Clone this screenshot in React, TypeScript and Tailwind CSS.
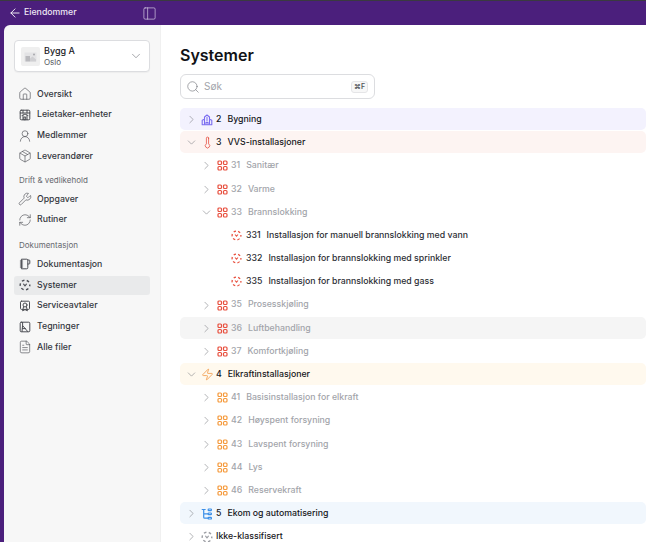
import React from "react";
import { ArrowLeft, PanelLeft, ChevronDown, ChevronRight, House, UserRound, Package, Wrench, RefreshCw, FileText, Search, Thermometer, Zap } from "lucide-react";

const Grid4 = ({ c }: { c: string }) => (
  <svg width="11" height="11" viewBox="0 0 11 11" fill="none" stroke={c} strokeWidth="1.2" className="shrink-0">
    <rect x="1" y="1" width="3.5" height="3.5" rx="1" />
    <rect x="6.5" y="1" width="3.5" height="3.5" rx="1" />
    <rect x="1" y="6.5" width="3.5" height="3.5" rx="1" />
    <rect x="6.5" y="6.5" width="3.5" height="3.5" rx="1" />
  </svg>
);

const DashedCircle = ({ c, size = 11 }: { c: string; size?: number }) => (
  <svg width={size} height={size} viewBox="0 0 12 12" fill="none" stroke={c} strokeWidth="1.4" className="shrink-0">
    <circle cx="6" cy="6" r="4.8" strokeDasharray="2.6 2.43" strokeDashoffset="1.3" />
    <path d="M4.6 5.2 6 6.9l1.4-1.7" strokeWidth="1.1" strokeLinecap="round" />
  </svg>
);

const svgBase = { width: 12, height: 12, viewBox: "0 0 12 12", fill: "none", stroke: "currentColor", strokeWidth: 1, strokeLinecap: "round" as const, strokeLinejoin: "round" as const };

const TenantIcon = () => (
  <svg {...svgBase}>
    <rect x="1.2" y="1.2" width="9.6" height="9.6" rx="1" />
    <path d="M1.2 4h9.6M4 1.2V4M8 1.2V4M3 6.5 6 5l3 1.5M4 6.5v4.3M8 6.5v4.3M5.3 8h1.4v2.8H5.3z" />
  </svg>
);
const NotebookIcon = () => (
  <svg {...svgBase}>
    <path d="M2.8 1.2h5a1 1 0 0 1 1 1v7.6a1 1 0 0 1-1 1h-5z" />
    <path d="M1.3 3h2.4M1.3 5h2.4M1.3 7h2.4M1.3 9h2.4" />
    <path d="M8.8 2h1.2a.8.8 0 0 1 .8.8v2.4a.8.8 0 0 1-.8.8H8.8" />
  </svg>
);
const ServiceIcon = () => (
  <svg {...svgBase}>
    <rect x="1.5" y="1.2" width="9" height="8.2" rx="1" />
    <circle cx="6" cy="5" r="2" />
    <path d="m4.6 6.6-1 4.2L6 9.6l2.4 1.2-1-4.2" />
  </svg>
);
const DrawingIcon = () => (
  <svg {...svgBase}>
    <rect x="1.2" y="1.2" width="9.6" height="9.6" rx="1" />
    <path d="M3.6 1.4v3.2L8.8 10.6M3.6 4.6 3 10.6M3.4 7.6h3" />
  </svg>
);
const BuildingIcon = ({ c }: { c: string }) => (
  <svg width="12" height="12" viewBox="0 0 12 12" fill="none" stroke={c} strokeWidth="1.1" strokeLinejoin="round" className="shrink-0">
    <path d="M1.2 10.8V6.2l2.3-1V3l2.5-2 2.5 2v2.2l2.3 1v4.6z" />
    <path d="M3.5 5.2v5.6M8.5 5.2v5.6M5 10.8V8.4h2v2.4M5 4h2M5 6h2" />
  </svg>
);
const TreeIcon = ({ c }: { c: string }) => (
  <svg width="12" height="12" viewBox="0 0 12 12" fill="none" stroke={c} strokeWidth="1.2" strokeLinecap="round" strokeLinejoin="round" className="shrink-0">
    <path d="M1.2 1.5h3M2.7 1.5v7.7a1 1 0 0 0 1 1H7M2.7 5.8H7" />
    <rect x="7.2" y="1" width="3.2" height="1.7" rx=".6" />
    <rect x="7.2" y="5" width="3.2" height="1.7" rx=".6" />
    <rect x="7.2" y="9.3" width="3.2" height="1.7" rx=".6" />
  </svg>
);
const PlaceholderPic = () => (
  <svg width="13" height="11" viewBox="0 0 13 11">
    <rect x="0.5" y="1.5" width="12" height="9" fill="#e3e3e5" />
    <rect x="1.5" y="5" width="4.5" height="5.5" fill="#b9b9bd" />
    <path d="M6 10.5V7.5l2.5-2 3.5 3v2z" fill="#cfcfd2" />
    <circle cx="10" cy="3.5" r="1" fill="#a8a8ad" />
  </svg>
);

const NavItem = ({ icon, label, active }: { icon: React.ReactNode; label: string; active?: boolean }) => (
  <div className={`flex h-[18.7px] items-center gap-[6px] rounded-[3px] px-[5px] text-[8.75px] font-medium text-[#33363d] ${active ? "bg-[#e9eaeb]" : ""}`}>
    <span className="flex w-[12px] shrink-0 justify-center text-[#4c4e54]">{icon}</span>
    {label}
  </div>
);

const ic = { size: 14, strokeWidth: 1.1, className: "shrink-0" };

type RowProps = { level: 0 | 1 | 2; open?: boolean; icon: React.ReactNode; num?: string; label: string; bg?: string };

const Row = ({ level, open, icon, num, label, bg = "" }: RowProps) => {
  const Chevron = open ? ChevronDown : ChevronRight;
  const pad = level === 0 ? "pl-[6px]" : level === 1 ? "pl-[21px]" : "pl-[51px]";
  const text = level === 1 ? "text-[#a2a4aa]" : level === 2 ? "text-[#2b2d33]" : "text-[#15161a]";
  const mr = level === 0 ? "mr-[5px]" : "mr-[6px]";
  return (
    <div className={`flex h-[22px] shrink-0 items-center rounded-[5px] pt-[1px] text-[8.75px] font-medium ${pad} ${text} ${bg}`}>
      {level < 2 && (
        <span className={`flex w-[10px] shrink-0 justify-center ${mr}`}>
          <Chevron size={13} strokeWidth={1.1} className="shrink-0 text-[#7e8086]" />
        </span>
      )}
      {icon}
      <span className={level === 2 ? "ml-[4px] flex gap-[6px]" : "ml-[3px] flex gap-[6px]"}>
        {num && <span>{num}</span>}
        <span>{label}</span>
      </span>
    </div>
  );
};

export default function App() {
  return (
    <div className="flex h-[542px] w-[646px] flex-col overflow-hidden bg-[#4b1f7c] font-['Inter',sans-serif]">
      <div className="flex h-[25px] shrink-0 items-center border-t border-[#3a3a40] pl-[8px] text-white">
        <ArrowLeft size={14} strokeWidth={1.5} />
        <span className="ml-[2px] text-[8.75px] font-medium text-[#eee8f5]">Eiendommer</span>
        <PanelLeft size={15} strokeWidth={1} className="ml-[65px] text-[#e5ddef]" />
      </div>
      <div className="flex min-h-0 flex-1 pl-[4px]">
        <aside className="flex w-[157px] shrink-0 flex-col rounded-tl-[6px] border-r border-[#f0f0f0] bg-[#f7f7f7] px-[10px] pt-[15px]">
          <div className="flex h-[32px] items-center rounded-[4px] border border-[#dcdde0] bg-white pl-[6px] pr-[6px] shadow-[0_1px_1px_rgba(0,0,0,0.04)]">
            <div className="flex h-[19px] w-[19px] items-center justify-center rounded-[2px] bg-[#efefef]">
              <PlaceholderPic />
            </div>
            <div className="ml-[4px] flex flex-1 flex-col text-[#1a1b1f]">
              <span className="text-[9px] font-medium leading-[11px]">Bygg A</span>
              <span className="text-[8px] leading-[12px] text-[#55575d]">Oslo</span>
            </div>
            <ChevronDown size={14} strokeWidth={1} className="text-[#66686e]" />
          </div>
          <div className="mt-[13px] flex flex-col gap-[2px]">
            <NavItem icon={<House {...ic} />} label="Oversikt" />
            <NavItem icon={<TenantIcon />} label="Leietaker-enheter" />
            <NavItem icon={<UserRound {...ic} />} label="Medlemmer" />
            <NavItem icon={<Package {...ic} />} label="Leverandører" />
          </div>
          <div className="mb-[5px] ml-[5px] mt-[9px] text-[8px] leading-[10px] text-[#66686e]">Drift &amp; vedlikehold</div>
          <div className="flex flex-col gap-[2px]">
            <NavItem icon={<Wrench {...ic} />} label="Oppgaver" />
            <NavItem icon={<RefreshCw {...ic} />} label="Rutiner" />
          </div>
          <div className="mb-[5px] ml-[5px] mt-[11px] text-[8px] leading-[10px] text-[#66686e]">Dokumentasjon</div>
          <div className="flex flex-col gap-[2px]">
            <NavItem icon={<NotebookIcon />} label="Dokumentasjon" />
            <NavItem icon={<DashedCircle c="#4c4e54" size={12} />} label="Systemer" active />
            <NavItem icon={<ServiceIcon />} label="Serviceavtaler" />
            <NavItem icon={<DrawingIcon />} label="Tegninger" />
            <NavItem icon={<FileText {...ic} />} label="Alle filer" />
          </div>
        </aside>
        <main className="min-w-0 flex-1 bg-white pl-[19px]">
          <h1 className="mt-[20px] text-[16px] font-semibold leading-[20px] text-[#111216]">Systemer</h1>
          <div className="mt-[9px] flex h-[25px] w-[195px] items-center rounded-[6px] border border-[#dcdde0] pl-[5px] pr-[6px]">
            <Search size={14} strokeWidth={1} className="text-[#66686e]" />
            <span className="ml-[4px] flex-1 text-[10px] text-[#a2a4aa]">Søk</span>
            <span className="rounded-[3px] border border-[#e5e5e7] bg-[#f7f7f7] px-[2px] text-[7px] font-semibold leading-[10px] text-[#55575d]">⌘F</span>
          </div>
          <div className="mt-[9px] flex flex-col gap-[1.2px]">
            <Row level={0} icon={<BuildingIcon c="#7a6cf0" />} num="2" label="Bygning" bg="bg-[#f3f2fe]" />
            <Row level={0} open icon={<Thermometer size={13} strokeWidth={1.4} className="-mx-[0.5px] shrink-0 text-[#e5483a]" />} num="3" label="VVS-installasjoner" bg="bg-[#fdf4f2]" />
            <Row level={1} icon={<Grid4 c="#e8503f" />} num="31" label="Sanitær" />
            <Row level={1} icon={<Grid4 c="#e8503f" />} num="32" label="Varme" />
            <Row level={1} open icon={<Grid4 c="#e8503f" />} num="33" label="Brannslokking" />
            <Row level={2} icon={<DashedCircle c="#e8503f" />} num="331" label="Installasjon for manuell brannslokking med vann" />
            <Row level={2} icon={<DashedCircle c="#e8503f" />} num="332" label="Installasjon for brannslokking med sprinkler" />
            <Row level={2} icon={<DashedCircle c="#e8503f" />} num="335" label="Installasjon for brannslokking med gass" />
            <Row level={1} icon={<Grid4 c="#e8503f" />} num="35" label="Prosesskjøling" />
            <Row level={1} icon={<Grid4 c="#e8503f" />} num="36" label="Luftbehandling" bg="bg-[#f5f5f5]" />
            <Row level={1} icon={<Grid4 c="#e8503f" />} num="37" label="Komfortkjøling" />
            <Row level={0} open icon={<Zap size={13} strokeWidth={1.3} className="-mx-[0.5px] shrink-0 text-[#f08c2e]" />} num="4" label="Elkraftinstallasjoner" bg="bg-[#fff9ee]" />
            <Row level={1} icon={<Grid4 c="#f59a3c" />} num="41" label="Basisinstallasjon for elkraft" />
            <Row level={1} icon={<Grid4 c="#f59a3c" />} num="42" label="Høyspent forsyning" />
            <Row level={1} icon={<Grid4 c="#f59a3c" />} num="43" label="Lavspent forsyning" />
            <Row level={1} icon={<Grid4 c="#f59a3c" />} num="44" label="Lys" />
            <Row level={1} icon={<Grid4 c="#f59a3c" />} num="46" label="Reservekraft" />
            <Row level={0} icon={<TreeIcon c="#3b8fe8" />} num="5" label="Ekom og automatisering" bg="bg-[#f1f7fd]" />
            <Row level={0} icon={<DashedCircle c="#9a9ca2" size={12} />} label="Ikke-klassifisert" />
          </div>
        </main>
      </div>
    </div>
  );
}
